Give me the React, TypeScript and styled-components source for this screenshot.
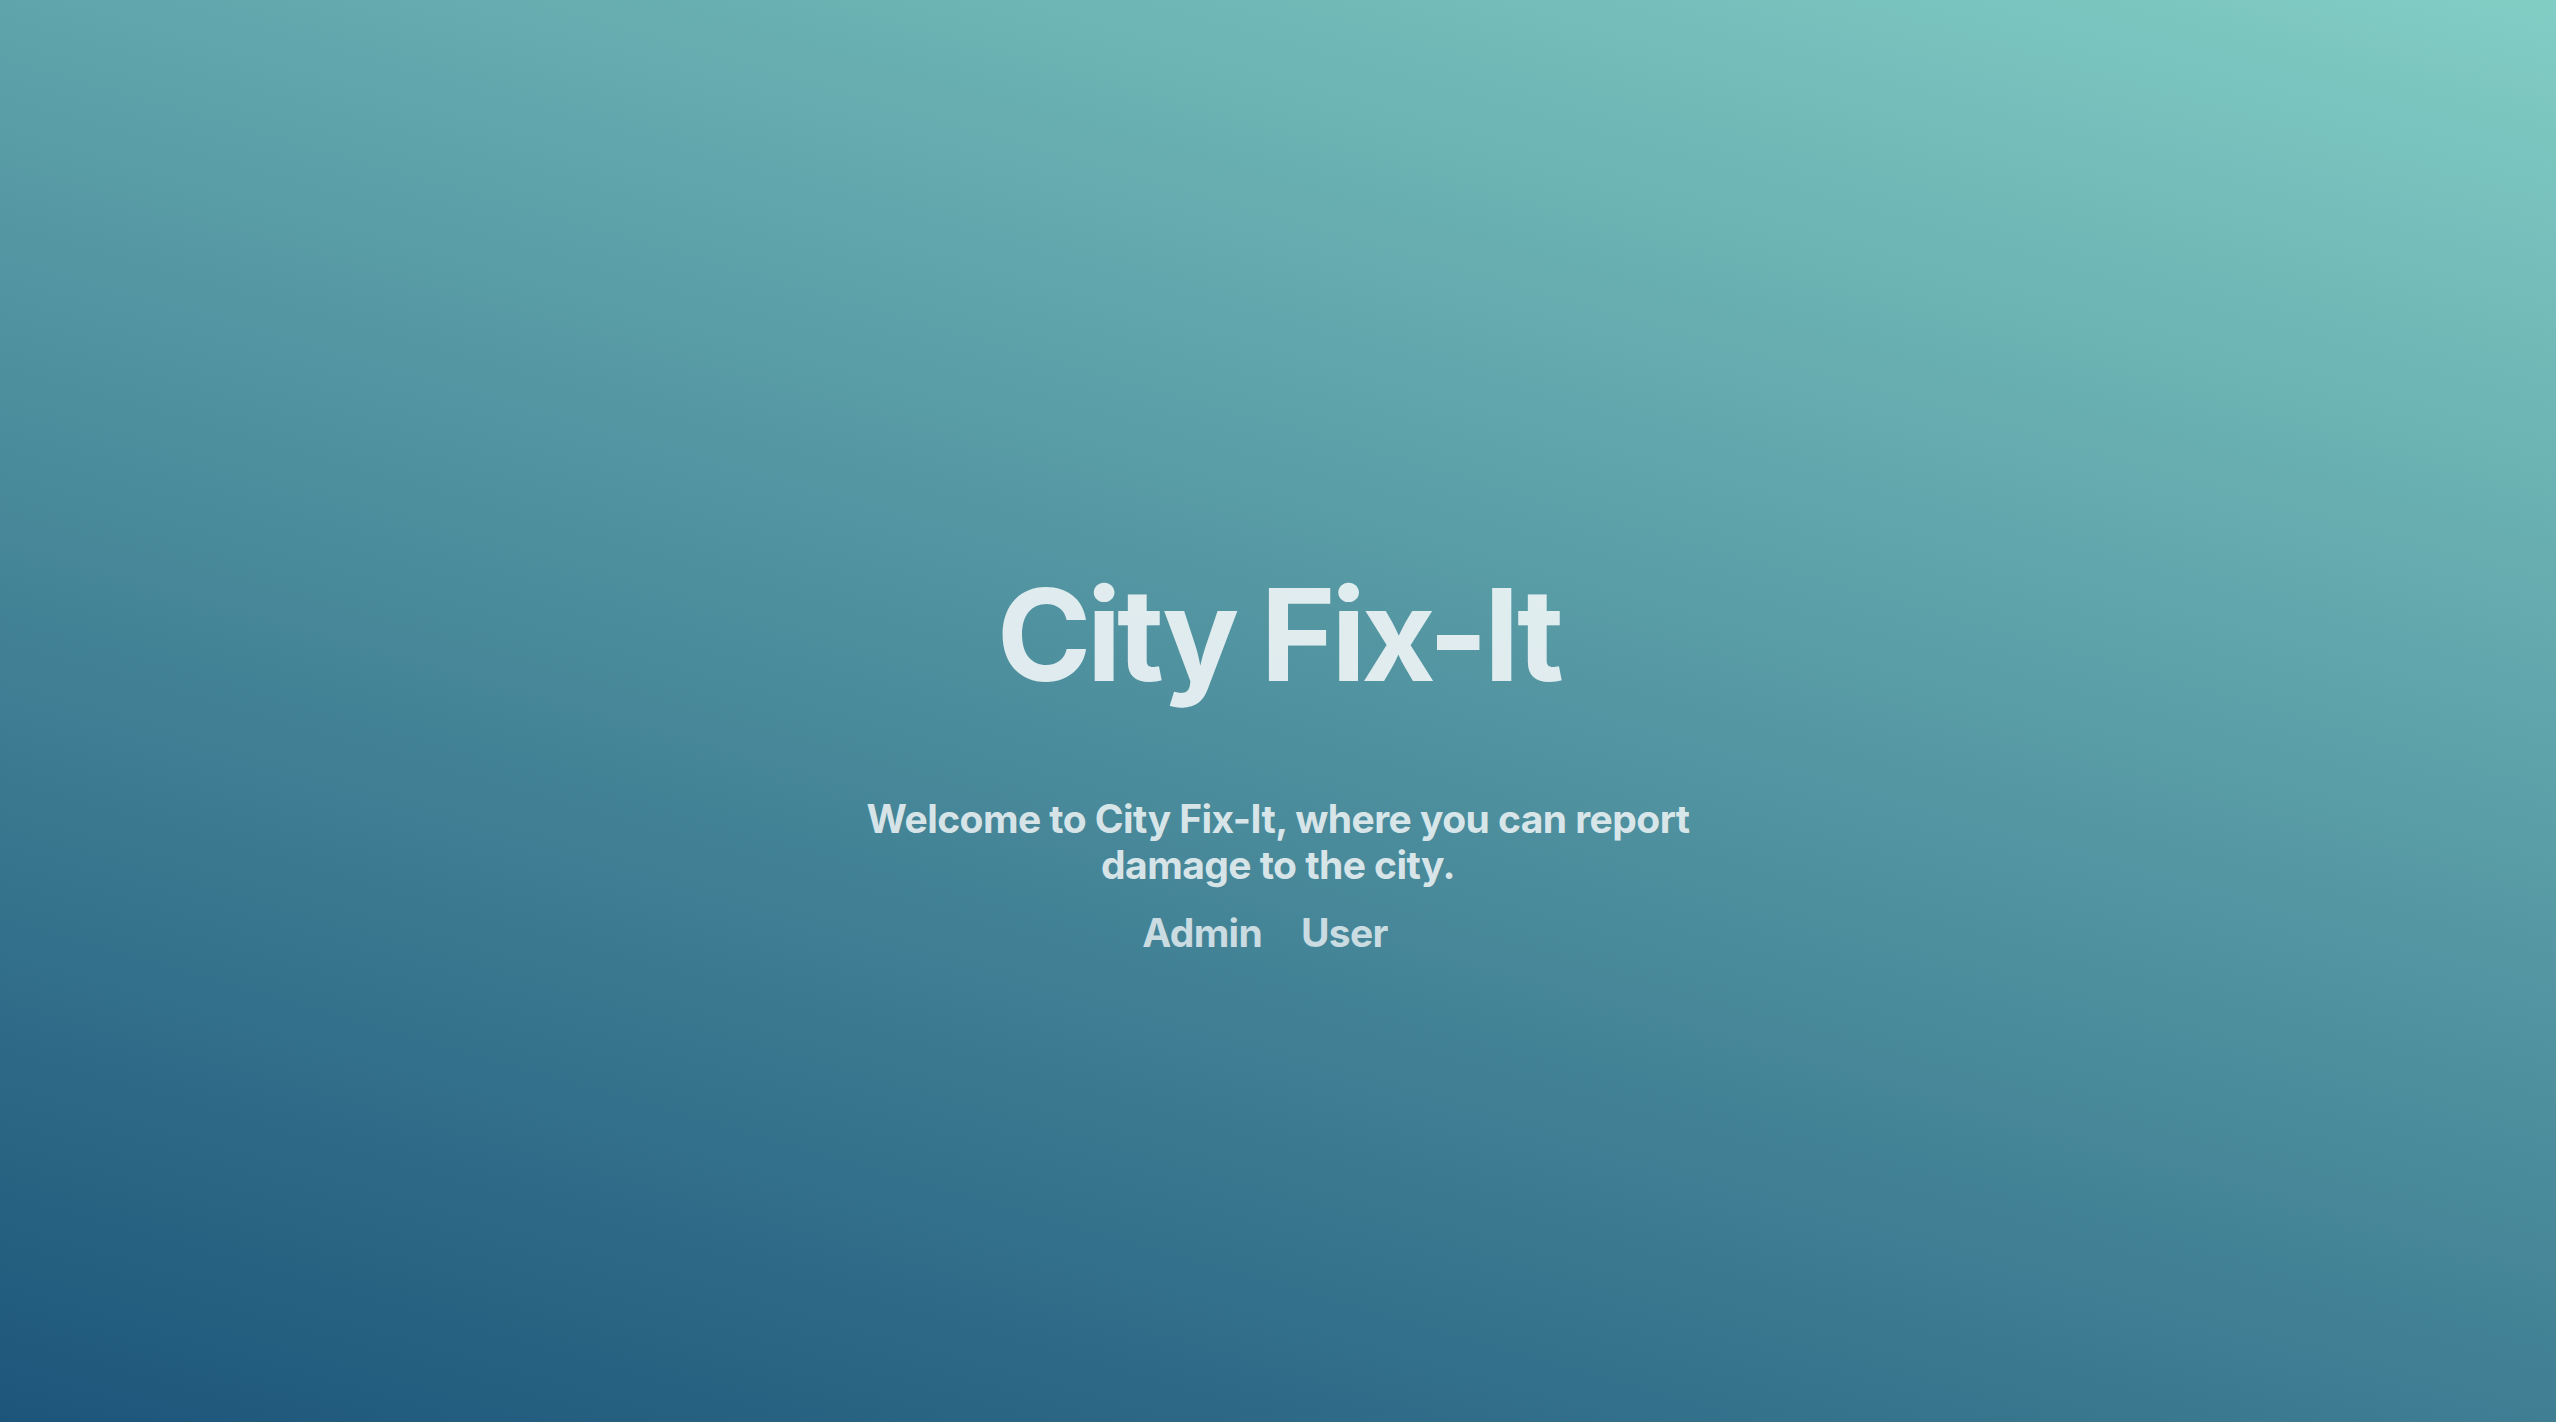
import React from "react";
import styled, { createGlobalStyle } from "styled-components";

const GlobalStyle = createGlobalStyle`
  html, body, #root { margin: 0; padding: 0; height: 100%; }
  body { font-family: Inter, "Noto Sans", sans-serif; }
`;

const Page = styled.main`
  min-height: 100vh;
  width: 100%;
  display: flex;
  flex-direction: column;
  align-items: center;
  justify-content: center;
  background: linear-gradient(16deg, #1c557a 0%, #82cdc4 100%);
  box-sizing: border-box;
  padding-top: 104px;
`;

const Title = styled.h1`
  margin: 0 0 97px;
  font-size: 128px;
  font-weight: 700;
  line-height: 1;
  letter-spacing: -4.5px;
  color: rgba(255, 255, 255, 0.82);
`;

const Subtitle = styled.p`
  margin: 0;
  max-width: 840px;
  text-align: center;
  font-size: 39px;
  font-weight: 700;
  line-height: 46px;
  letter-spacing: -0.55px;
  color: rgba(255, 255, 255, 0.8);
`;

const Links = styled.nav`
  display: flex;
  gap: 13px;
  margin-top: 21px;
`;

const NavLink = styled.a`
  margin-right: 26px;
  font-size: 39px;
  font-weight: 700;
  letter-spacing: -0.7px;
  color: rgba(255, 255, 255, 0.72);
  text-decoration: none;
  cursor: pointer;
`;

export default function App() {
  return (
    <>
      <GlobalStyle />
      <Page>
        <Title>City Fix-It</Title>
        <Subtitle>Welcome to City Fix-It, where you can report damage to the city.</Subtitle>
        <Links>
          <NavLink href="#admin">Admin</NavLink>
          <NavLink href="#user">User</NavLink>
        </Links>
      </Page>
    </>
  );
}
